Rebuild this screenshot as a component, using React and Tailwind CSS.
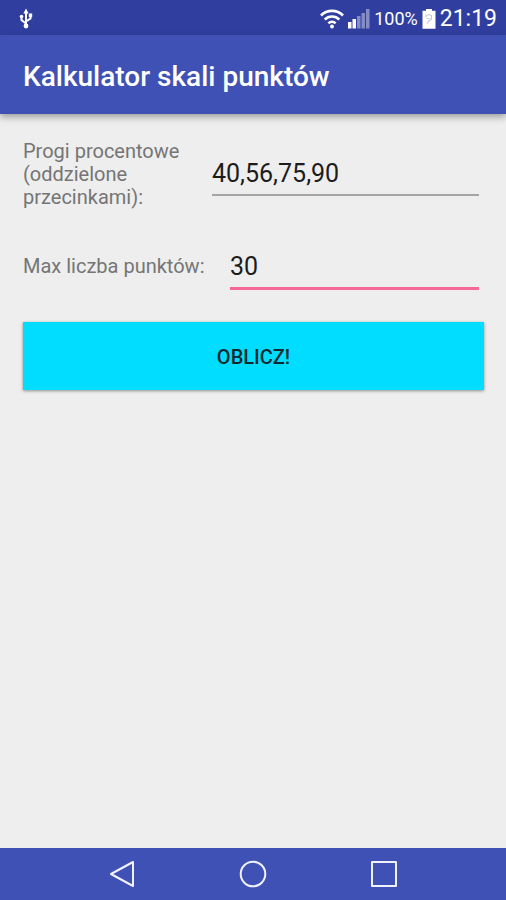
import { useState } from "react"

export default function App() {
  const [thresholds, setThresholds] = useState("40,56,75,90")
  const [maxPoints, setMaxPoints] = useState("30")

  return (
    <div className="flex min-h-screen flex-col bg-[#eeeeee] font-['Roboto',sans-serif]">
      <StatusBar />

      <header className="z-10 flex h-[79px] items-center bg-[#3f51b5] px-[23px] pt-1 shadow-[0_3px_7px_rgba(0,0,0,0.35)]">
        <h1 className="text-[28px] leading-8 font-medium text-white">
          Kalkulator skali punktów
        </h1>
      </header>

      <main className="flex-1 pt-[26px] pr-[22px] pl-[23px]">
        <form onSubmit={(e) => e.preventDefault()}>
          <div className="flex items-center pr-[5px]">
            <label
              htmlFor="thresholds"
              className="w-[189px] shrink-0 pr-4 text-[20px] leading-[23px] text-[#757575]"
            >
              Progi procentowe (oddzielone przecinkami):
            </label>
            <input
              id="thresholds"
              type="text"
              value={thresholds}
              onChange={(e) => setThresholds(e.target.value)}
              className="h-[42px] min-w-0 flex-1 border-b-2 border-[#a5a5a5] text-[25px] text-[#1c1c1c] outline-none"
            />
          </div>

          <div className="mt-[37px] flex items-center pr-[5px]">
            <label
              htmlFor="max-points"
              className="w-[207px] shrink-0 pb-1 text-[20px] leading-[23px] text-[#757575]"
            >
              Max liczba punktów:
            </label>
            <input
              id="max-points"
              type="text"
              inputMode="numeric"
              value={maxPoints}
              onChange={(e) => setMaxPoints(e.target.value)}
              className="h-11 min-w-0 flex-1 border-b-3 border-[#f56798] text-[25px] text-[#1c1c1c] outline-none"
            />
          </div>

          <button
            type="submit"
            className="mt-8 h-[68px] w-full bg-[#00ddff] pt-0.5 text-[20px] font-medium text-[#10282e] uppercase shadow-[0_1px_3px_rgba(0,0,0,0.4)]"
          >
            Oblicz!
          </button>
        </form>
      </main>

      <NavigationBar />
    </div>
  )
}

function StatusBar() {
  return (
    <div className="flex h-[35px] items-center justify-between bg-[#303f9f] pt-0.5 pr-[9px] pl-[18px] text-white">
      <UsbIcon />
      <div className="flex items-center gap-1">
        <WifiIcon />
        <SignalIcon />
        <span className="text-[18px] leading-6">100%</span>
        <BatteryIcon />
        <span className="text-[23px] leading-7">21:19</span>
      </div>
    </div>
  )
}

function NavigationBar() {
  return (
    <nav className="flex h-[52px] items-center justify-center gap-[102px] bg-[#3f51b5] text-[#f0f2ff]">
      <button type="button" aria-label="Back">
        <svg width="28" height="28" viewBox="0 0 28 28" fill="none" stroke="currentColor" strokeWidth="2" strokeLinejoin="round">
          <path d="M24 2v24L2 14z" />
        </svg>
      </button>
      <button type="button" aria-label="Home">
        <svg width="28" height="28" viewBox="0 0 28 28" fill="none" stroke="currentColor" strokeWidth="2">
          <circle cx="14" cy="14" r="12.3" />
        </svg>
      </button>
      <button type="button" aria-label="Recent apps">
        <svg width="28" height="28" viewBox="0 0 28 28" fill="none" stroke="currentColor" strokeWidth="2" strokeLinejoin="round">
          <rect x="3" y="2" width="24" height="24" />
        </svg>
      </button>
    </nav>
  )
}

function UsbIcon() {
  return (
    <svg width="16" height="22" viewBox="0 0 16 22" fill="none" stroke="currentColor" strokeWidth="2">
      <path d="M8 4v14M8 15.500L3.500 12V8.500M8 13.500l4.500-3V7" />
      <path d="M8 0.500L10.600 5.500H5.400z" fill="currentColor" stroke="none" />
      <circle cx="8" cy="18" r="2.400" fill="currentColor" stroke="none" />
      <circle cx="3.500" cy="8.500" r="1.800" fill="currentColor" stroke="none" />
      <path d="M10.800 5.500h3.400v3.400h-3.400z" fill="currentColor" stroke="none" />
    </svg>
  )
}

function WifiIcon() {
  return (
    <svg width="24" height="20" viewBox="0 0 24 20" fill="none" stroke="currentColor" strokeWidth="2.600">
      <path d="M1 6.500a15.500 15.500 0 0 1 22 0" />
      <path d="M4.700 10.500a10.300 10.300 0 0 1 14.600 0" />
      <path d="M8.400 14.300a5.100 5.100 0 0 1 7.200 0" />
      <circle cx="12" cy="17.500" r="1.900" fill="currentColor" stroke="none" />
    </svg>
  )
}

function SignalIcon() {
  return (
    <svg width="22" height="20" viewBox="0 0 22 20" fill="currentColor">
      <rect x="0" y="13" width="3.500" height="6.500" />
      <rect x="4.500" y="10" width="3.500" height="9.500" />
      <g opacity="0.4">
        <rect x="9" y="7" width="3.500" height="12.500" />
        <rect x="13.500" y="4" width="3.500" height="15.500" />
        <rect x="18" y="0" width="3.500" height="19.500" />
      </g>
    </svg>
  )
}

function BatteryIcon() {
  return (
    <svg width="14" height="20" viewBox="0 0 14 20">
      <path d="M4 0h6v1.800h3.500v18H.5v-18H4z" fill="currentColor" />
      <path d="M4 8.500V6.500l3-1 2.500 1v3.500L7 12l-2 2.500M4.500 9.500h3" fill="none" stroke="#c4c7d2" strokeWidth="1.100" />
    </svg>
  )
}
